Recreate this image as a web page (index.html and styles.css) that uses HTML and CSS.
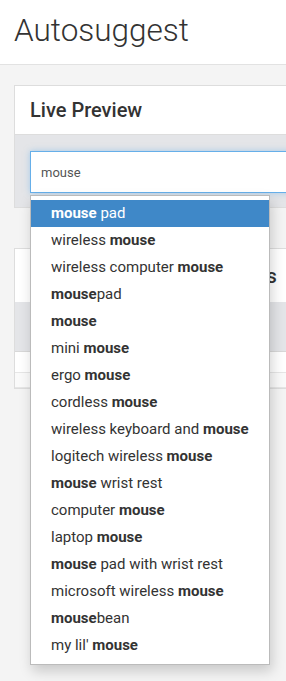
FILE: index.html
```html
<!DOCTYPE html>
<html>
<head>
<meta charset="utf-8">
<link rel="stylesheet" href="styles.css">
</head>
<body>
<header class="topbar"><h1 class="page-title">Autosuggest</h1></header>
<main class="content">
  <section class="card">
    <div class="card-head"><h2 class="card-title">Live Preview</h2></div>
    <div class="card-body">
      <div class="field">
        <input class="search" type="text" value="mouse">
        <ul class="suggest">
          <li class="item active"><b>mouse</b> pad</li>
          <li class="item">wireless <b>mouse</b></li>
          <li class="item">wireless computer <b>mouse</b></li>
          <li class="item"><b>mouse</b>pad</li>
          <li class="item"><b>mouse</b></li>
          <li class="item">mini <b>mouse</b></li>
          <li class="item">ergo <b>mouse</b></li>
          <li class="item">cordless <b>mouse</b></li>
          <li class="item">wireless keyboard and <b>mouse</b></li>
          <li class="item">logitech wireless <b>mouse</b></li>
          <li class="item"><b>mouse</b> wrist rest</li>
          <li class="item">computer <b>mouse</b></li>
          <li class="item">laptop <b>mouse</b></li>
          <li class="item"><b>mouse</b> pad with wrist rest</li>
          <li class="item">microsoft wireless <b>mouse</b></li>
          <li class="item"><b>mouse</b>bean</li>
          <li class="item">my lil' <b>mouse</b></li>
        </ul>
      </div>
    </div>
  </section>
  <section class="card card2">
    <div class="card-head"><h2 class="card-title tight">Customize Top Suggestions</h2></div>
    <div class="band"><span class="band-text">Name</span></div>
    <div class="row"></div>
    <div class="row row-alt"></div>
  </section>
</main>
</body>
</html>
```
FILE: styles.css
```css
html, body { margin: 0; padding: 0; }
body {
  background: #f4f4f4;
  font-family: Roboto, "Liberation Sans", sans-serif;
  color: #333;
  overflow: hidden;
  width: 286px;
  height: 681px;
}
.topbar {
  background: #fff;
  height: 64px;
  border-bottom: 1px solid #e2e2e2;
  padding-left: 14px;
  display: flex;
  align-items: center;
}
.page-title {
  margin: 0;
  font-size: 31.5px;
  font-weight: 300;
  color: #333;
  line-height: 1;
  padding-bottom: 2px;
}
.content {
  padding: 20px 0 0 14px;
}
.card {
  width: 420px;
  background: #fff;
  border: 1px solid #ddd;
}
.card-head {
  height: 48px;
  border-bottom: 1px solid #ddd;
  padding-left: 15px;
  display: flex;
  align-items: center;
}
.card-title {
  margin: 0;
  font-size: 20px;
  font-weight: 500;
  color: #333;
  white-space: nowrap;
}
.card-title.tight { letter-spacing: -0.12px; }
.card-body {
  background: #e4e5e8;
  padding: 16px 15px 14px;
}
.field { position: relative; }
.search {
  display: block;
  box-sizing: border-box;
  width: 100%;
  height: 42px;
  border: 1px solid #66afe9;
  box-shadow: 0 0 6px rgba(102, 175, 233, 0.5);
  outline: none;
  padding: 0 10px;
  font-family: Roboto, "Liberation Sans", sans-serif;
  font-size: 13px;
  color: #555;
  background: #fff;
}
.suggest {
  position: absolute;
  top: 44px;
  left: 0;
  width: 240px;
  box-sizing: border-box;
  margin: 0;
  padding: 4px 0 5px;
  list-style: none;
  background: #fff;
  border: 1px solid #bbb;
  box-shadow: 2px 6px 12px rgba(0, 0, 0, 0.18);
  z-index: 5;
}
.item {
  height: 27px;
  line-height: 27px;
  padding-left: 20px;
  font-size: 15px;
  color: #333;
  white-space: nowrap;
}
.item b { font-weight: 700; }
.item.active {
  background: #3f88c8;
  color: #fff;
}
.card2 {
  margin-top: 40px;
}
.card2 .card-head {
  height: 53px;
  border-bottom: none;
}
.band {
  background: #e4e5e8;
  height: 49px;
  border-bottom: 1px solid #d8d8d8;
  padding-left: 15px;
  display: flex;
  align-items: center;
}
.band-text { font-size: 14px; font-weight: 500; color: #333; }
.row {
  height: 20px;
  border-bottom: 1px solid #e6e6e6;
}
.row-alt {
  height: 14px;
  background: #fafafa;
}
```
